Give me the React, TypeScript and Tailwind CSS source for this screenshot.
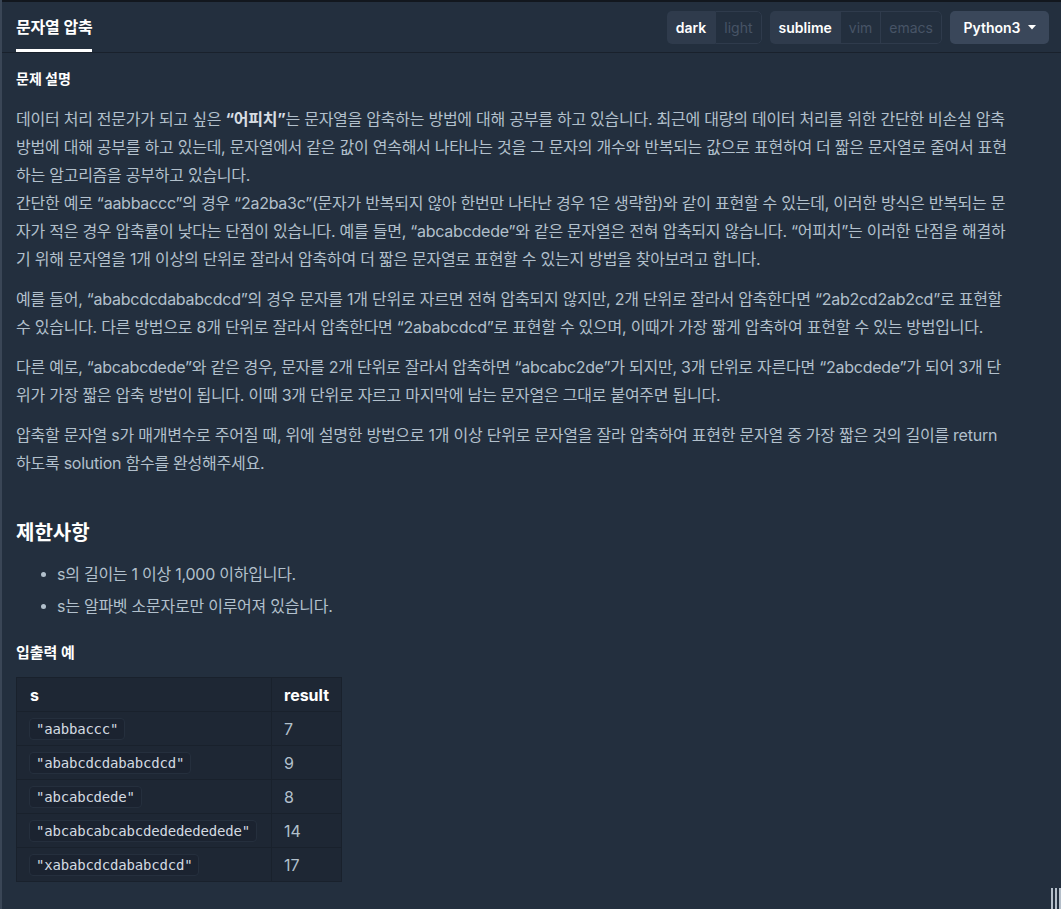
import React from "react";

const FONT = { fontFamily: 'Inter, "Noto Sans CJK KR", sans-serif' };
const MONO = { fontFamily: '"DejaVu Sans Mono", "Noto Sans CJK KR", monospace' };

const rows: [string, number][] = [
  ["aabbaccc", 7],
  ["ababcdcdababcdcd", 9],
  ["abcabcdede", 8],
  ["abcabcabcabcdededededede", 14],
  ["xababcdcdababcdcd", 17],
];

export default function App() {
  return (
    <div
      className="w-[1061px] h-[909px] bg-[#232f3e] border-l-2 border-[#3a4656] relative overflow-hidden flex flex-col"
      style={FONT}
    >
      <div className="h-[2px] bg-[#12171e] -ml-[2px]" />
      {/* header */}
      <div className="h-[51px] flex items-stretch justify-between border-b border-[#19212c] pl-[14px] pr-[12px]">
        <div className="relative flex items-center">
          <span className="text-white text-[16px] font-semibold tracking-[-0.2px] pb-[1px]">문자열 압축</span>
          <div className="absolute left-0 right-0 bottom-[0px] h-[3px] bg-white" />
        </div>
        <div className="flex items-center gap-[8px] pt-[1px]">
          <div className="flex h-[33px] rounded-[5px] overflow-hidden text-[14px]">
            <div className="bg-[#2f3b4c] text-white font-semibold px-[9px] flex items-center">dark</div>
            <div className="border border-[#2f3b4c] rounded-r-[5px] text-[#475466] px-[8px] flex items-center">light</div>
          </div>
          <div className="flex h-[33px] rounded-[5px] overflow-hidden text-[14px]">
            <div className="bg-[#2f3b4c] text-white font-semibold px-[9px] flex items-center">sublime</div>
            <div className="border-y border-[#2f3b4c] border-r text-[#475466] px-[8px] flex items-center">vim</div>
            <div className="border border-l-0 border-[#2f3b4c] rounded-r-[5px] text-[#475466] px-[8px] flex items-center">emacs</div>
          </div>
          <div className="h-[33px] w-[99px] rounded-[5px] bg-[#3a475a] text-white font-semibold text-[14px] flex items-center justify-center gap-[7px]">
            <span>Python3</span>
            <svg width="8" height="5" viewBox="0 0 8 5"><path d="M0 0 L8 0 L4 4.5 Z" fill="#ffffff" /></svg>
          </div>
        </div>
      </div>

      {/* content */}
      <div className="pl-[14px] pr-[48px] pt-[16px] text-[#b2c0cc] text-[16px] leading-[28px] tracking-[-0.25px]">
        <h5 className="text-white text-[14px] font-bold leading-[20px] mb-[16px] tracking-normal">문제 설명</h5>
        <p className="mb-[12px]">
          데이터 처리 전문가가 되고 싶은 <b className="text-[#d7dde3] font-bold">“어피치”</b>는 문자열을 압축하는 방법에 대해 공부를 하고 있습니다. 최근에 대량의 데이터 처리를 위한 간단한 비손실 압축 방법에 대해 공부를 하고 있는데, 문자열에서 같은 값이 연속해서 나타나는 것을 그 문자의 개수와 반복되는 값으로 표현하여 더 짧은 문자열로 줄여서 표현하는 알고리즘을 공부하고 있습니다.
          <br />
          간단한 예로 “aabbaccc”의 경우 “2a2ba3c”(문자가 반복되지 않아 한번만 나타난 경우 1은 생략함)와 같이 표현할 수 있는데, 이러한 방식은 반복되는 문자가 적은 경우 압축률이 낮다는 단점이 있습니다. 예를 들면, “abcabcdede”와 같은 문자열은 전혀 압축되지 않습니다. “어피치”는 이러한 단점을 해결하기 위해 문자열을 1개 이상의 단위로 잘라서 압축하여 더 짧은 문자열로 표현할 수 있는지 방법을 찾아보려고 합니다.
        </p>
        <p className="mb-[12px]">
          예를 들어, “ababcdcdababcdcd”의 경우 문자를 1개 단위로 자르면 전혀 압축되지 않지만, 2개 단위로 잘라서 압축한다면 “2ab2cd2ab2cd”로 표현할 수 있습니다. 다른 방법으로 8개 단위로 잘라서 압축한다면 “2ababcdcd”로 표현할 수 있으며, 이때가 가장 짧게 압축하여 표현할 수 있는 방법입니다.
        </p>
        <p className="mb-[12px]">
          다른 예로, “abcabcdede”와 같은 경우, 문자를 2개 단위로 잘라서 압축하면 “abcabc2de”가 되지만, 3개 단위로 자른다면 “2abcdede”가 되어 3개 단위가 가장 짧은 압축 방법이 됩니다. 이때 3개 단위로 자르고 마지막에 남는 문자열은 그대로 붙여주면 됩니다.
        </p>
        <p className="mb-[12px]">
          압축할 문자열 s가 매개변수로 주어질 때, 위에 설명한 방법으로 1개 이상 단위로 문자열을 잘라 압축하여 표현한 문자열 중 가장 짧은 것의 길이를 return 하도록 solution 함수를 완성해주세요.
        </p>

        <h4 className="text-white text-[20px] font-bold leading-[28px] mt-[42px] mb-[13px] tracking-normal">제한사항</h4>
        <ul className="pl-[25px] flex flex-col gap-[4px]">
          <li className="flex items-center gap-[11px]">
            <span className="w-[5px] h-[5px] rounded-full bg-[#b2c0cc] shrink-0" />
            <span>s의 길이는 1 이상 1,000 이하입니다.</span>
          </li>
          <li className="flex items-center gap-[11px]">
            <span className="w-[5px] h-[5px] rounded-full bg-[#b2c0cc] shrink-0" />
            <span>s는 알파벳 소문자로만 이루어져 있습니다.</span>
          </li>
        </ul>

        <h5 className="text-white text-[15px] font-bold leading-[22px] mt-[22px] mb-[13px] tracking-normal">입출력 예</h5>
        <table className="border-collapse bg-[#1e2734] border border-[#19212c] tracking-normal">
          <thead>
            <tr className="h-[34px]">
              <th className="w-[255px] text-left px-[13px] text-white font-bold border border-[#19212c]">s</th>
              <th className="w-[70px] text-left px-[12px] text-white font-bold border border-[#19212c]">result</th>
            </tr>
          </thead>
          <tbody>
            {rows.map(([s, r]) => (
              <tr key={s} className="h-[34px]">
                <td className="pl-[12px] pr-[10px] border border-[#19212c] leading-[20px]">
                  <code
                    className="inline-block text-[14px] leading-[20px] px-[6px] rounded-[4px] bg-[#1b2330] border border-[#252f3d] text-[#d3dae1] tracking-[-0.2px]"
                    style={MONO}
                  >
                    "{s}"
                  </code>
                </td>
                <td className="px-[12px] border border-[#19212c]">{r}</td>
              </tr>
            ))}
          </tbody>
        </table>
      </div>

      {/* resize handle */}
      <div className="absolute right-0 bottom-0 flex gap-[2px]">
        <div className="w-[2px] h-[21px] bg-[#b4bec9]" />
        <div className="w-[2px] h-[21px] bg-[#b4bec9]" />
        <div className="w-[2px] h-[21px] bg-[#b4bec9]" />
      </div>
    </div>
  );
}
